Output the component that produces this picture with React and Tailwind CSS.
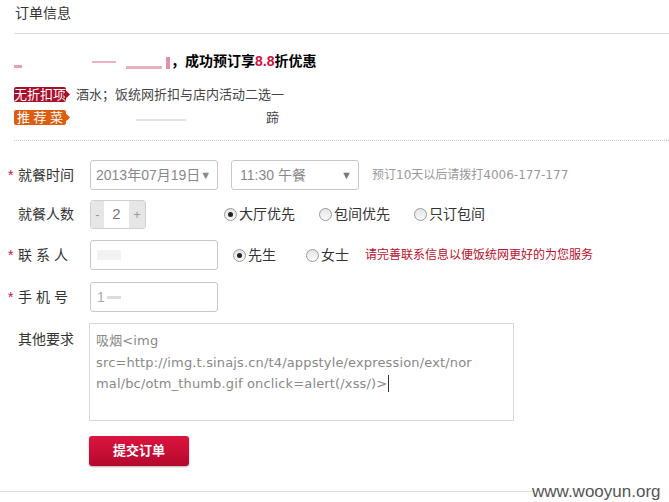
const font = { fontFamily: '"Liberation Sans", "Noto Sans CJK SC", sans-serif' };
const wide = { fontFamily: '"DejaVu Sans", "Noto Sans CJK SC", sans-serif' };

function Badge({ children, color }) {
    return (
        <span className={`relative inline-flex items-center h-[15px] w-[52px] justify-center rounded-[2px] text-[13px] leading-none text-white ${color}`}>
            {children}
            <span className={`absolute right-[-3px] top-[5px] h-[5px] w-[5px] rotate-45 ${color}`} />
        </span>
    );
}

function Radio({ checked, label, className = "" }) {
    return (
        <label className={`flex items-center gap-[2px] text-[14px] text-[#333] ${className}`}>
            <span className="flex h-[13px] w-[13px] items-center justify-center rounded-full border border-[#9a9a9a] bg-gradient-to-b from-[#e4e4e4] to-[#fafafa]">
                {checked && <span className="h-[5px] w-[5px] rounded-full bg-[#222]" />}
            </span>
            {label}
        </label>
    );
}

function Label({ required, children, spaced }) {
    return (
        <div className="flex w-[90px] shrink-0 items-center pl-[8px] text-[14px] text-[#333]">
            <span className="w-[10px] text-[#d01030]">{required ? "*" : ""}</span>
            <span className={spaced ? "tracking-[4px]" : ""}>{children}</span>
        </div>
    );
}

export default function App() {
    return (
        <div className="w-[669px] h-[502px] bg-white overflow-hidden" style={font}>
            <div className="ml-[14px] h-[34px] border-b border-[#dcdcdc] pl-[1px] pt-[3px] text-[14px] text-[#333]">订单信息</div>

            <div className="ml-[14px] border-b border-dotted border-[#c8c8c8] pb-[13px]">
                <div className="flex h-[38px] items-end text-[14px] font-bold text-black">
                    <span className="mb-[4px] mr-[70px] h-[3px] w-[8px] bg-[#e9a0b0]" />
                    <span className="mb-[9px] h-[2px] w-[24px] bg-[#f2b0c0]" />
                    <span className="mb-[3px] ml-[10px] h-[3px] w-[36px] bg-[#eab0c0]" />
                    <span className="mb-[3px] ml-[4px] h-[12px] w-[4px] bg-[#e090a8]" />
                    <span className="ml-[1px]">，成功预订享<span className="text-[#d0103a]">8.8</span>折优惠</span>
                </div>
                <div className="mt-[13px] flex items-center gap-[10px] text-[13px] text-[#444]">
                    <Badge color="bg-[#a8102a]">无折扣项</Badge>
                    <span>酒水；饭统网折扣与店内活动二选一</span>
                </div>
                <div className="mt-[3px] flex items-center text-[13px] text-[#444]">
                    <Badge color="bg-[#dd5e12]">推 荐 菜</Badge>
                    <span className="ml-[70px] mt-[6px] h-[2px] w-[50px] bg-[#e4e4e4]" />
                    <span className="ml-[80px]">蹄</span>
                </div>
            </div>

            <div className="flex flex-col pt-[19px]">
                <div className="flex h-[30px] items-center">
                    <Label required>就餐时间</Label>
                    <div className="flex h-[30px] w-[128px] items-center rounded-[3px] border border-[#c8c8c8] pl-[5px] text-[14px] text-[#888]">2013年07月19日<span className="text-[11px]">▼</span></div>
                    <div className="ml-[13px] flex h-[30px] w-[128px] items-center justify-between rounded-[3px] border border-[#c8c8c8] pl-[8px] pr-[6px] text-[14px] text-[#888]">
                        <span>11:30 午餐</span>
                        <span className="text-[11px] text-[#777]">▼</span>
                    </div>
                    <span className="ml-[13px] text-[12px] text-[#999]" style={wide}>预订10天以后请拨打4006-177-177</span>
                </div>

                <div className="mt-[10px] flex h-[29px] items-center">
                    <Label>就餐人数</Label>
                    <div className="flex h-[29px] w-[56px] overflow-hidden rounded-[3px] border border-[#d0d0d0] text-[#999]">
                        <span className="flex w-[13px] items-center justify-center bg-[#e6e6e6] text-[13px]">-</span>
                        <span className="flex w-[25px] items-center justify-center bg-white text-[15px] text-[#777]">2</span>
                        <span className="flex flex-1 items-center justify-center bg-[#e6e6e6] text-[13px]">+</span>
                    </div>
                    <Radio checked label="大厅优先" className="ml-[78px]" />
                    <Radio label="包间优先" className="ml-[24px]" />
                    <Radio label="只订包间" className="ml-[24px]" />
                </div>

                <div className="mt-[11px] flex h-[30px] items-center">
                    <Label required spaced>联系人</Label>
                    <div className="flex h-[30px] w-[128px] items-center rounded-[3px] border border-[#c8c8c8] pl-[6px]">
                        <span className="h-[10px] w-[24px] bg-[#f2f2f2]" />
                    </div>
                    <Radio checked label="先生" className="ml-[15px]" />
                    <Radio label="女士" className="ml-[30px]" />
                    <span className="ml-[16px] text-[12px] text-[#b8102a]">请完善联系信息以便饭统网更好的为您服务</span>
                </div>

                <div className="mt-[12px] flex h-[30px] items-center">
                    <Label required spaced>手机号</Label>
                    <div className="flex h-[30px] w-[128px] items-center rounded-[3px] border border-[#c8c8c8] pl-[6px] text-[14px] text-[#aaa]">
                        1<span className="ml-[2px] h-[3px] w-[14px] bg-[#ddd]" />
                    </div>
                </div>

                <div className="mt-[11px] flex">
                    <div className="flex w-[89px] shrink-0 pl-[18px] pt-[6px] text-[14px] text-[#333]">其他要求</div>
                    <div className="h-[98px] w-[425px] border border-[#d8d8d8] pl-[6px] pt-[6px] text-[13px] leading-[21.5px] tracking-[0.15px] text-[#888]" style={wide}>
                        <div>吸烟&lt;img</div>
                        <div>src=http://img.t.sinajs.cn/t4/appstyle/expression/ext/nor</div>
                        <div className="flex items-center">mal/bc/otm_thumb.gif onclick=alert(/xss/)&gt;<span className="ml-[1px] inline-block h-[17px] w-px bg-[#333]" /></div>
                    </div>
                </div>

                <div className="ml-[89px] mt-[15px]">
                    <button className="h-[30px] w-[100px] rounded-[3px] bg-gradient-to-b from-[#dc1440] to-[#b5082c] text-[13px] font-bold text-white shadow-[0_1px_2px_rgba(0,0,0,0.3)]">提交订单</button>
                </div>

                <div className="mt-[17px] flex items-center">
                    <div className="h-px w-[534px] bg-[#dcdcdc]" />
                    <span className="ml-[-2px] text-[17px] leading-none text-[#555]">www.wooyun.org</span>
                </div>
            </div>
        </div>
    );
}
